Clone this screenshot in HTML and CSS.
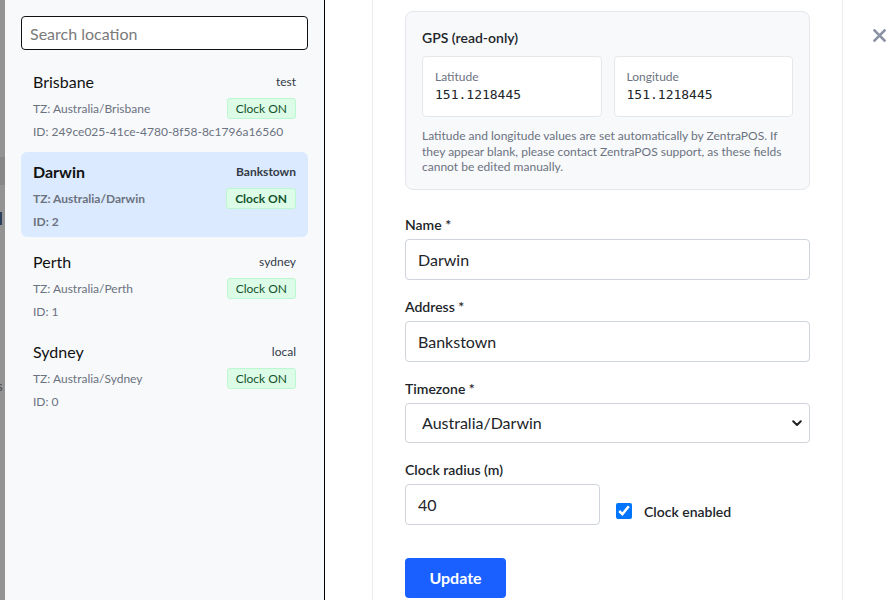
FILE: index.html
```html
<!DOCTYPE html>
<html lang="en">
<head>
<meta charset="utf-8">
<title>Locations</title>
<link rel="stylesheet" href="styles.css">
</head>
<body>
<div class="screen">
  <div class="page-behind">
    <span class="behind-band"></span>
    <span class="behind-mark"></span>
    <span class="behind-letter">s</span>
  </div>

  <aside class="sidebar">
    <input class="search" type="text" placeholder="Search location">
    <ul class="loc-list">
      <li class="loc">
        <div class="loc-row">
          <span class="loc-name">Brisbane</span>
          <span class="loc-addr">test</span>
        </div>
        <div class="loc-row loc-row-badge">
          <span class="loc-meta">TZ: Australia/Brisbane</span>
          <span class="badge">Clock ON</span>
        </div>
        <div class="loc-meta loc-id">ID: 249ce025-41ce-4780-8f58-8c1796a16560</div>
      </li>
      <li class="loc is-active">
        <div class="loc-row">
          <span class="loc-name">Darwin</span>
          <span class="loc-addr">Bankstown</span>
        </div>
        <div class="loc-row loc-row-badge">
          <span class="loc-meta">TZ: Australia/Darwin</span>
          <span class="badge">Clock ON</span>
        </div>
        <div class="loc-meta loc-id">ID: 2</div>
      </li>
      <li class="loc">
        <div class="loc-row">
          <span class="loc-name">Perth</span>
          <span class="loc-addr">sydney</span>
        </div>
        <div class="loc-row loc-row-badge">
          <span class="loc-meta">TZ: Australia/Perth</span>
          <span class="badge">Clock ON</span>
        </div>
        <div class="loc-meta loc-id">ID: 1</div>
      </li>
      <li class="loc">
        <div class="loc-row">
          <span class="loc-name">Sydney</span>
          <span class="loc-addr">local</span>
        </div>
        <div class="loc-row loc-row-badge">
          <span class="loc-meta">TZ: Australia/Sydney</span>
          <span class="badge">Clock ON</span>
        </div>
        <div class="loc-meta loc-id">ID: 0</div>
      </li>
    </ul>
  </aside>

  <main class="editor">
    <button class="close" type="button" aria-label="Close">
      <svg width="13" height="13" viewBox="0 0 13 13">
        <path d="M1.5 1.5 L11.5 11.5 M11.5 1.5 L1.5 11.5" stroke="currentColor" stroke-width="2.6" stroke-linecap="square" fill="none"/>
      </svg>
    </button>

    <div class="editor-body">
      <section class="gps">
        <h3 class="gps-title">GPS (read-only)</h3>
        <div class="gps-grid">
          <div class="gps-cell">
            <div class="gps-label">Latitude</div>
            <div class="gps-value">151.1218445</div>
          </div>
          <div class="gps-cell">
            <div class="gps-label">Longitude</div>
            <div class="gps-value">151.1218445</div>
          </div>
        </div>
        <p class="gps-note">Latitude and longitude values are set automatically by ZentraPOS. If they appear blank, please contact ZentraPOS support, as these fields cannot be edited manually.</p>
      </section>

      <form class="loc-form">
        <div class="field">
          <label class="field-label" for="f-name">Name *</label>
          <input id="f-name" class="control" type="text" value="Darwin">
        </div>
        <div class="field">
          <label class="field-label" for="f-address">Address *</label>
          <input id="f-address" class="control" type="text" value="Bankstown">
        </div>
        <div class="field">
          <label class="field-label" for="f-tz">Timezone *</label>
          <div class="select-wrap">
            <select id="f-tz" class="control control-select">
              <option>Australia/Darwin</option>
            </select>
            <svg class="select-chevron" width="10" height="7" viewBox="0 0 10 7">
              <path d="M1.2 1.2 L5 5 L8.8 1.2" stroke="#222" stroke-width="2" fill="none" stroke-linecap="round" stroke-linejoin="round"/>
            </svg>
          </div>
        </div>
        <div class="field-row">
          <div class="field field-radius">
            <label class="field-label" for="f-radius">Clock radius (m)</label>
            <input id="f-radius" class="control" type="text" value="40">
          </div>
          <label class="check">
            <input class="check-box" type="checkbox" checked>
            <span class="check-text">Clock enabled</span>
          </label>
        </div>
        <button class="btn-primary" type="button">Update</button>
      </form>
    </div>
  </main>
</div>
</body>
</html>
```

FILE: styles.css
```css
* {
  box-sizing: border-box;
}

html, body {
  margin: 0;
  padding: 0;
  background: #fff;
}

body {
  font-family: Lato, "Noto Sans", sans-serif;
  color: #212529;
}

.screen {
  display: flex;
  height: 600px;
  overflow: hidden;
}

/* sliver of the dimmed page behind the drawer */
.page-behind {
  position: relative;
  width: 5px;
  flex: none;
  background: #939393;
  overflow: hidden;
}

.behind-band {
  position: absolute;
  left: 0;
  top: 157px;
  width: 5px;
  height: 28px;
  background: #888;
}

.behind-mark {
  position: absolute;
  left: 0;
  top: 212px;
  width: 2px;
  height: 13px;
  background: #2a3f5c;
}

.behind-letter {
  position: absolute;
  left: -3px;
  top: 378px;
  font-size: 13px;
  line-height: 16px;
  color: #4d4d4d;
}

/* location list */
.sidebar {
  width: 320px;
  flex: none;
  background: #f8f9fb;
  border-right: 1px solid #000;
  padding: 16px;
}

.search {
  display: block;
  width: 100%;
  height: 34px;
  border: 1px solid #111;
  border-radius: 4px;
  background: #fff;
  padding: 0 8px;
  font-family: inherit;
  font-size: 16px;
  color: #212529;
  outline: none;
}

.search::placeholder {
  color: #7a7a7a;
}

.loc-list {
  list-style: none;
  margin: 12px 0 0;
  padding: 0;
  display: flex;
  flex-direction: column;
  gap: 5px;
}

.loc {
  height: 85px;
  padding: 7px 12px 6px;
  border-radius: 6px;
}

.loc.is-active {
  background: #dbeafe;
  font-weight: 700;
}

.loc-row {
  display: flex;
  align-items: center;
  justify-content: space-between;
  height: 24px;
}

.loc-row-badge {
  height: 21px;
  margin-top: 5px;
}

.loc-name {
  font-size: 16px;
  color: #111;
}

.loc-addr {
  font-size: 12px;
  color: #333a47;
}

.loc-meta {
  font-size: 12px;
  color: #6b7280;
}

.loc-id {
  margin-top: 4px;
  line-height: 18px;
}

.badge {
  height: 21px;
  line-height: 19px;
  padding: 0 8px;
  font-size: 12px;
  color: #14532d;
  background: #dcfce7;
  border: 1px solid #bbf7d0;
  border-radius: 3px;
}

/* editor drawer */
.editor {
  position: relative;
  flex: 1;
  background: #fff;
}

.close {
  position: absolute;
  top: 29px;
  right: 7px;
  padding: 0;
  border: 0;
  background: none;
  color: #8b93a4;
  line-height: 0;
  cursor: pointer;
}

.editor-body {
  width: 471px;
  height: 100%;
  margin-left: 47px;
  padding: 11px 32px 0;
  border-left: 1px solid #ececec;
  border-right: 1px solid #ececec;
}

.gps {
  background: #f8f9fb;
  border: 1px solid #e5e7eb;
  border-radius: 8px;
  padding: 16px 16px 14px;
}

.gps-title {
  margin: 0;
  font-size: 14px;
  line-height: 20px;
  font-weight: 600;
  color: #212529;
}

.gps-grid {
  display: grid;
  grid-template-columns: 1fr 1fr;
  gap: 12px;
  margin-top: 8px;
}

.gps-cell {
  background: #fff;
  border: 1px solid #e5e7eb;
  border-radius: 4px;
  padding: 12px 12px 12px;
}

.gps-label {
  font-size: 12px;
  line-height: 16px;
  color: #6b7280;
}

.gps-value {
  font-family: "DejaVu Sans Mono", "Liberation Mono", monospace;
  font-size: 13px;
  line-height: 19px;
  color: #212529;
}

.gps-note {
  margin: 11px 0 0;
  font-size: 12px;
  line-height: 15.5px;
  color: #6b7280;
}

.loc-form {
  margin-top: 25px;
}

.field {
  margin-bottom: 17px;
}

.field-label {
  display: block;
  font-size: 14px;
  line-height: 20px;
  font-weight: 600;
  color: #212529;
  margin-bottom: 4px;
}

.control {
  display: block;
  width: 100%;
  height: 41px;
  border: 1px solid #ced4da;
  border-radius: 4px;
  background: #fff;
  padding: 0 12px;
  font-family: inherit;
  font-size: 16px;
  color: #212529;
  outline: none;
}

.select-wrap {
  position: relative;
}

.control-select {
  height: 40px;
  padding-left: 16px;
  appearance: none;
  -webkit-appearance: none;
}

.select-chevron {
  position: absolute;
  right: 8px;
  top: 17px;
  pointer-events: none;
}

.field-row {
  display: flex;
  align-items: flex-end;
  gap: 16px;
}

.field-radius {
  width: 195px;
  margin-bottom: 0;
}

.check {
  display: flex;
  align-items: center;
  gap: 12px;
  margin-bottom: 5px;
  font-size: 14px;
  font-weight: 600;
  color: #212529;
}

.check-box {
  width: 16px;
  height: 16px;
  margin: 0;
  accent-color: #0075ff;
}

.btn-primary {
  display: block;
  margin-top: 33px;
  width: 101px;
  height: 40px;
  border: 0;
  border-radius: 4px;
  background: #1a5fff;
  color: #fff;
  font-family: inherit;
  font-size: 16px;
  font-weight: 700;
  cursor: pointer;
}
```
